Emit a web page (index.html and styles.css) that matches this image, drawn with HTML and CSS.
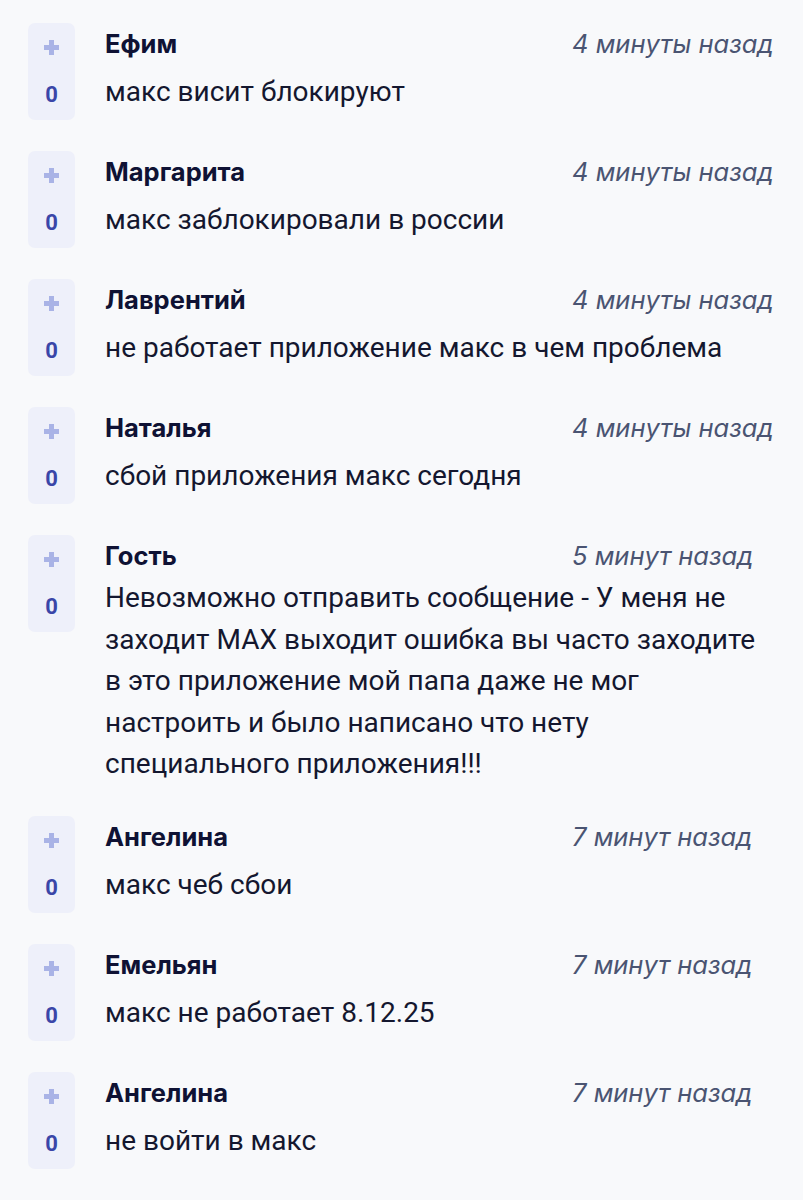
FILE: index.html
```html
<!DOCTYPE html>
<html lang="ru">
<head>
<meta charset="utf-8">
<link rel="stylesheet" href="styles.css">
</head>
<body>
<div class="list">
  <div class="comment">
    <div class="vote"><svg class="plus" viewBox="0 0 15 15"><path d="M5 0h5v5h5v5h-5v5H5v-5H0V5h5z"/></svg><span class="score">0</span></div>
    <div class="body"><div class="head"><span class="name">Ефим</span><span class="time">4 минуты назад</span></div><p class="text">макс висит блокируют</p></div>
  </div>
  <div class="comment">
    <div class="vote"><svg class="plus" viewBox="0 0 15 15"><path d="M5 0h5v5h5v5h-5v5H5v-5H0V5h5z"/></svg><span class="score">0</span></div>
    <div class="body"><div class="head"><span class="name">Маргарита</span><span class="time">4 минуты назад</span></div><p class="text">макс заблокировали в россии</p></div>
  </div>
  <div class="comment">
    <div class="vote"><svg class="plus" viewBox="0 0 15 15"><path d="M5 0h5v5h5v5h-5v5H5v-5H0V5h5z"/></svg><span class="score">0</span></div>
    <div class="body"><div class="head"><span class="name">Лаврентий</span><span class="time">4 минуты назад</span></div><p class="text">не работает приложение макс в чем проблема</p></div>
  </div>
  <div class="comment">
    <div class="vote"><svg class="plus" viewBox="0 0 15 15"><path d="M5 0h5v5h5v5h-5v5H5v-5H0V5h5z"/></svg><span class="score">0</span></div>
    <div class="body"><div class="head"><span class="name">Наталья</span><span class="time">4 минуты назад</span></div><p class="text">сбой приложения макс сегодня</p></div>
  </div>
  <div class="comment">
    <div class="vote"><svg class="plus" viewBox="0 0 15 15"><path d="M5 0h5v5h5v5h-5v5H5v-5H0V5h5z"/></svg><span class="score">0</span></div>
    <div class="body"><div class="head"><span class="name">Гость</span><span class="time">5 минут назад</span></div><p class="text long">Невозможно отправить сообщение - У меня не<br>заходит MAX выходит ошибка вы часто заходите<br>в это приложение мой папа даже не мог<br>настроить и было написано что нету<br>специального приложения!!!</p></div>
  </div>
  <div class="comment">
    <div class="vote"><svg class="plus" viewBox="0 0 15 15"><path d="M5 0h5v5h5v5h-5v5H5v-5H0V5h5z"/></svg><span class="score">0</span></div>
    <div class="body"><div class="head"><span class="name">Ангелина</span><span class="time">7 минут назад</span></div><p class="text">макс чеб сбои</p></div>
  </div>
  <div class="comment">
    <div class="vote"><svg class="plus" viewBox="0 0 15 15"><path d="M5 0h5v5h5v5h-5v5H5v-5H0V5h5z"/></svg><span class="score">0</span></div>
    <div class="body"><div class="head"><span class="name">Емельян</span><span class="time">7 минут назад</span></div><p class="text">макс не работает 8.12.25</p></div>
  </div>
  <div class="comment">
    <div class="vote"><svg class="plus" viewBox="0 0 15 15"><path d="M5 0h5v5h5v5h-5v5H5v-5H0V5h5z"/></svg><span class="score">0</span></div>
    <div class="body"><div class="head"><span class="name">Ангелина</span><span class="time">7 минут назад</span></div><p class="text">не войти в макс</p></div>
  </div>
</div>
</body>
</html>
```
FILE: styles.css
```css
* { box-sizing: border-box; }
html, body { margin: 0; padding: 0; }
body {
  background: #f8f9fb;
  font-family: Roboto, "Noto Sans", sans-serif;
  color: #10132e;
}
.list {
  padding: 23px 28px 0 28px;
  display: flex;
  flex-direction: column;
  gap: 31px;
}
.comment {
  display: flex;
  gap: 30px;
  align-items: flex-start;
}
.vote {
  flex: 0 0 47px;
  width: 47px;
  height: 97px;
  background: #eef0fa;
  border-radius: 7px;
  display: flex;
  flex-direction: column;
  align-items: center;
  padding-top: 17px;
}
.plus {
  width: 15px;
  height: 15px;
  fill: #a9b3e6;
}
.score {
  margin-top: 27px;
  font-size: 22px;
  font-weight: 700;
  color: #3a46a8;
  line-height: 26px;
}
.body {
  flex: 1;
  padding-top: 6px;
  min-width: 0;
}
.head {
  display: grid;
  grid-template-columns: 467px auto;
  line-height: 30px;
}
.name {
  font-family: Inter, Roboto, sans-serif;
  font-size: 25.5px;
  font-weight: 700;
  color: #0f1234;
}
.time {
  font-family: Inter, Roboto, sans-serif;
  font-size: 25.5px;
  font-style: italic;
  color: #4a5472;
}
.text {
  margin: 12px 0 0 0;
  font-size: 28px;
  line-height: 41.5px;
  color: #14172f;
}
.text.long {
  margin-top: 6px;
}
```
